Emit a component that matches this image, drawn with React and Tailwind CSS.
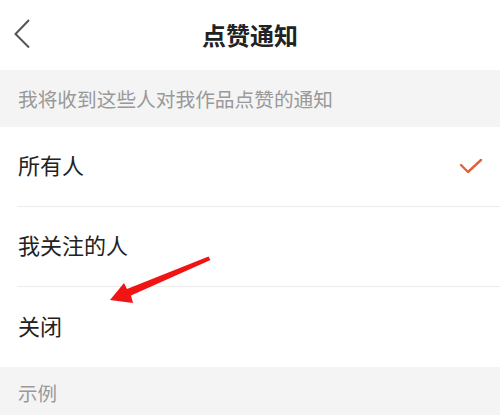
const font = { fontFamily: '"Noto Sans CJK SC", "Noto Sans", sans-serif' };

const options = ["所有人", "我关注的人", "关闭"];

export default function App() {
  return (
    <div className="relative w-[500px] h-[415px] overflow-hidden bg-white" style={font}>
      <div className="relative h-[70px] flex items-center justify-center">
        <svg className="absolute left-[12px] top-[18px]" width="22" height="32" viewBox="0 0 22 32">
          <path d="M17 2 L3.5 16 L17 29.5" fill="none" stroke="#555" strokeWidth="2" />
        </svg>
        <span className="text-[24px] font-bold text-[#222] leading-none">点赞通知</span>
      </div>
      <div className="h-[57px] bg-[#f4f4f4] flex items-center px-[18px]">
        <span className="text-[19.7px] text-[#999] leading-none">我将收到这些人对我作品点赞的通知</span>
      </div>
      <div className="pl-[17px]">
        {options.map((label, i) => (
          <div
            key={label}
            className={`h-[80px] flex items-center justify-between pr-[17px] ${
              i < options.length - 1 ? "border-b border-[#ececec]" : ""
            }`}
          >
            <span className="pl-[1px] -mt-[5px] text-[22px] text-[#222] leading-none">{label}</span>
            {i === 0 && (
              <svg className="-mt-[2px]" width="24" height="18" viewBox="0 0 24 18">
                <path d="M2 8 L9 15 L22 3" fill="none" stroke="#e2613a" strokeWidth="2.4" strokeLinecap="round" strokeLinejoin="round" />
              </svg>
            )}
          </div>
        ))}
      </div>
      <div className="h-[60px] bg-[#f4f4f4] flex items-center px-[18px]">
        <span className="text-[19.5px] text-[#999] leading-none -mt-[9px]">示例</span>
      </div>
      <svg className="absolute left-0 top-0 pointer-events-none" width="500" height="415" viewBox="0 0 500 415">
        <path d="M208.5 256.5 L210.5 260 L131 295.5 L133 303 L110 300 L124 283 L127 289 Z" fill="#f01414" />
      </svg>
    </div>
  );
}
